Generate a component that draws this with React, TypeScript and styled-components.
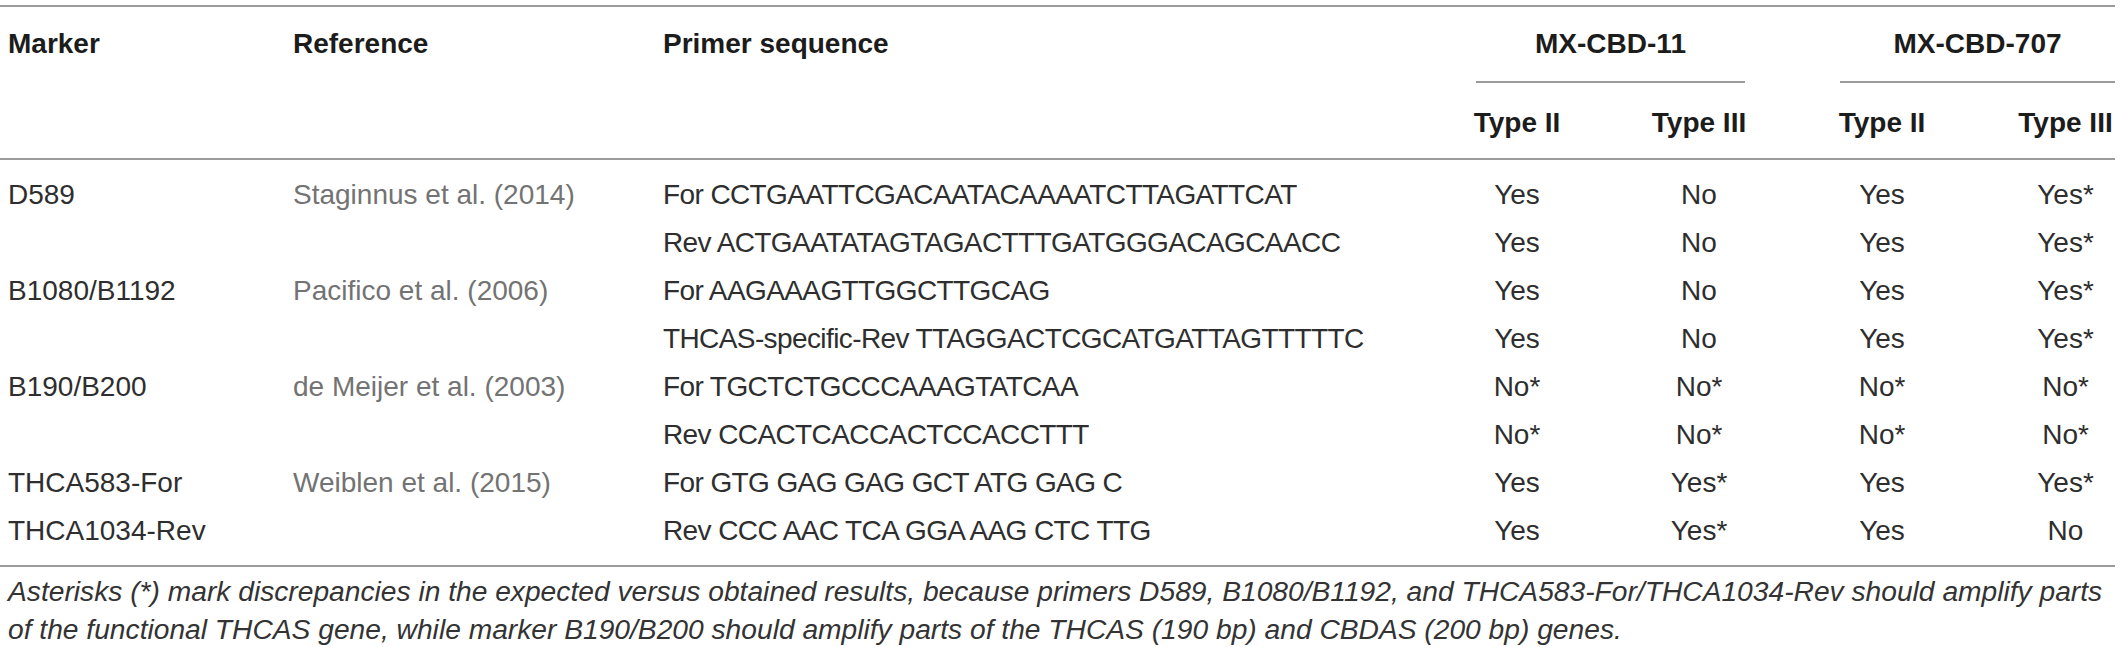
import React from "react";
import styled, { createGlobalStyle, css } from "styled-components";

const GlobalStyle = createGlobalStyle`
  html, body {
    margin: 0;
    padding: 0;
    background: #ffffff;
  }
  body {
    font-family: "Liberation Sans", Arial, Helvetica, sans-serif;
    color: #2e2e2e;
  }
`;

const Page = styled.div`
  width: 2120px;
  padding-top: 5px;
`;

const Table = styled.table`
  width: 2115px;
  table-layout: fixed;
  border-collapse: collapse;
  border-top: 2px solid #9b9b9b;
  border-bottom: 2px solid #9b9b9b;
  font-size: 28px;
`;

const Head = styled.thead`
  border-bottom: 2px solid #9b9b9b;
`;

const TopTh = styled.th`
  text-align: left;
  vertical-align: top;
  font-weight: 700;
  color: #1c1c1c;
  line-height: 32px;
  padding: 21px 8px 0;
`;

const GroupTh = styled.th`
  padding: 0;
  height: 76px;
  vertical-align: top;
`;

const GroupLabel = styled.div<{ $last?: boolean }>`
  height: 74px;
  line-height: 74px;
  margin: 0 ${(p) => (p.$last ? "0" : "45px")} 0 50px;
  border-bottom: 2px solid #9b9b9b;
  text-align: center;
  font-weight: 700;
  color: #1c1c1c;
`;

const SubTh = styled.th<{ $last?: boolean }>`
  height: 70px;
  padding: 5px 0 0 ${(p) => (p.$last ? "42px" : "0")};
  text-align: center;
  vertical-align: middle;
  font-weight: 700;
  color: #1c1c1c;
`;

const Row = styled.tr`
  &:first-child td {
    padding-top: 11px;
  }
  &:last-child td {
    padding-bottom: 10px;
  }
`;

const cellBase = css`
  line-height: 48px;
  white-space: nowrap;
  vertical-align: middle;
`;

const TextCell = styled.td`
  ${cellBase};
  padding: 0 8px;
  text-align: left;
  color: #2e2e2e;
`;

const RefCell = styled.td`
  ${cellBase};
  padding: 0 8px;
  text-align: left;
  color: #737373;
`;

const PrimerCell = styled.td`
  ${cellBase};
  padding: 0 8px;
  text-align: left;
  letter-spacing: -0.6px;
  color: #2e2e2e;
`;

const ValueCell = styled.td<{ $last?: boolean }>`
  ${cellBase};
  padding: 0 0 0 ${(p) => (p.$last ? "42px" : "0")};
  text-align: center;
  color: #2e2e2e;
`;

const Caption = styled.p`
  margin: 0;
  padding: 5px 0 0 8px;
  width: 2112px;
  font-size: 28.2px;
  line-height: 38px;
  font-style: italic;
  color: #333333;
`;

type DataRow = {
  marker: string;
  reference: string;
  primer: string;
  values: string[];
};

const rows: DataRow[] = [
  {
    marker: "D589",
    reference: "Staginnus et al. (2014)",
    primer: "For CCTGAATTCGACAATACAAAATCTTAGATTCAT",
    values: ["Yes", "No", "Yes", "Yes*"],
  },
  {
    marker: "",
    reference: "",
    primer: "Rev ACTGAATATAGTAGACTTTGATGGGACAGCAACC",
    values: ["Yes", "No", "Yes", "Yes*"],
  },
  {
    marker: "B1080/B1192",
    reference: "Pacifico et al. (2006)",
    primer: "For AAGAAAGTTGGCTTGCAG",
    values: ["Yes", "No", "Yes", "Yes*"],
  },
  {
    marker: "",
    reference: "",
    primer: "THCAS-specific-Rev TTAGGACTCGCATGATTAGTTTTTC",
    values: ["Yes", "No", "Yes", "Yes*"],
  },
  {
    marker: "B190/B200",
    reference: "de Meijer et al. (2003)",
    primer: "For TGCTCTGCCCAAAGTATCAA",
    values: ["No*", "No*", "No*", "No*"],
  },
  {
    marker: "",
    reference: "",
    primer: "Rev CCACTCACCACTCCACCTTT",
    values: ["No*", "No*", "No*", "No*"],
  },
  {
    marker: "THCA583-For",
    reference: "Weiblen et al. (2015)",
    primer: "For GTG GAG GAG GCT ATG GAG C",
    values: ["Yes", "Yes*", "Yes", "Yes*"],
  },
  {
    marker: "THCA1034-Rev",
    reference: "",
    primer: "Rev CCC AAC TCA GGA AAG CTC TTG",
    values: ["Yes", "Yes*", "Yes", "No"],
  },
];

const colWidths = [285, 370, 771, 182, 182, 184, 141];

export default function App() {
  return (
    <>
      <GlobalStyle />
      <Page>
        <Table>
          <colgroup>
            {colWidths.map((w, i) => (
              <col key={i} style={{ width: `${w}px` }} />
            ))}
          </colgroup>
          <Head>
            <tr>
              <TopTh rowSpan={2}>Marker</TopTh>
              <TopTh rowSpan={2}>Reference</TopTh>
              <TopTh rowSpan={2}>Primer sequence</TopTh>
              <GroupTh colSpan={2}>
                <GroupLabel>MX-CBD-11</GroupLabel>
              </GroupTh>
              <GroupTh colSpan={2}>
                <GroupLabel $last>MX-CBD-707</GroupLabel>
              </GroupTh>
            </tr>
            <tr>
              <SubTh>Type II</SubTh>
              <SubTh>Type III</SubTh>
              <SubTh>Type II</SubTh>
              <SubTh $last>Type III</SubTh>
            </tr>
          </Head>
          <tbody>
            {rows.map((r, i) => (
              <Row key={i}>
                <TextCell>{r.marker}</TextCell>
                <RefCell>{r.reference}</RefCell>
                <PrimerCell>{r.primer}</PrimerCell>
                {r.values.map((v, j) => (
                  <ValueCell key={j} $last={j === 3}>
                    {v}
                  </ValueCell>
                ))}
              </Row>
            ))}
          </tbody>
        </Table>
        <Caption>
          Asterisks (*) mark discrepancies in the expected versus obtained results, because primers D589,
          B1080/B1192, and THCA583-For/THCA1034-Rev should amplify parts of the functional THCAS gene, while
          marker B190/B200 should amplify parts of the THCAS (190 bp) and CBDAS (200 bp) genes.
        </Caption>
      </Page>
    </>
  );
}
